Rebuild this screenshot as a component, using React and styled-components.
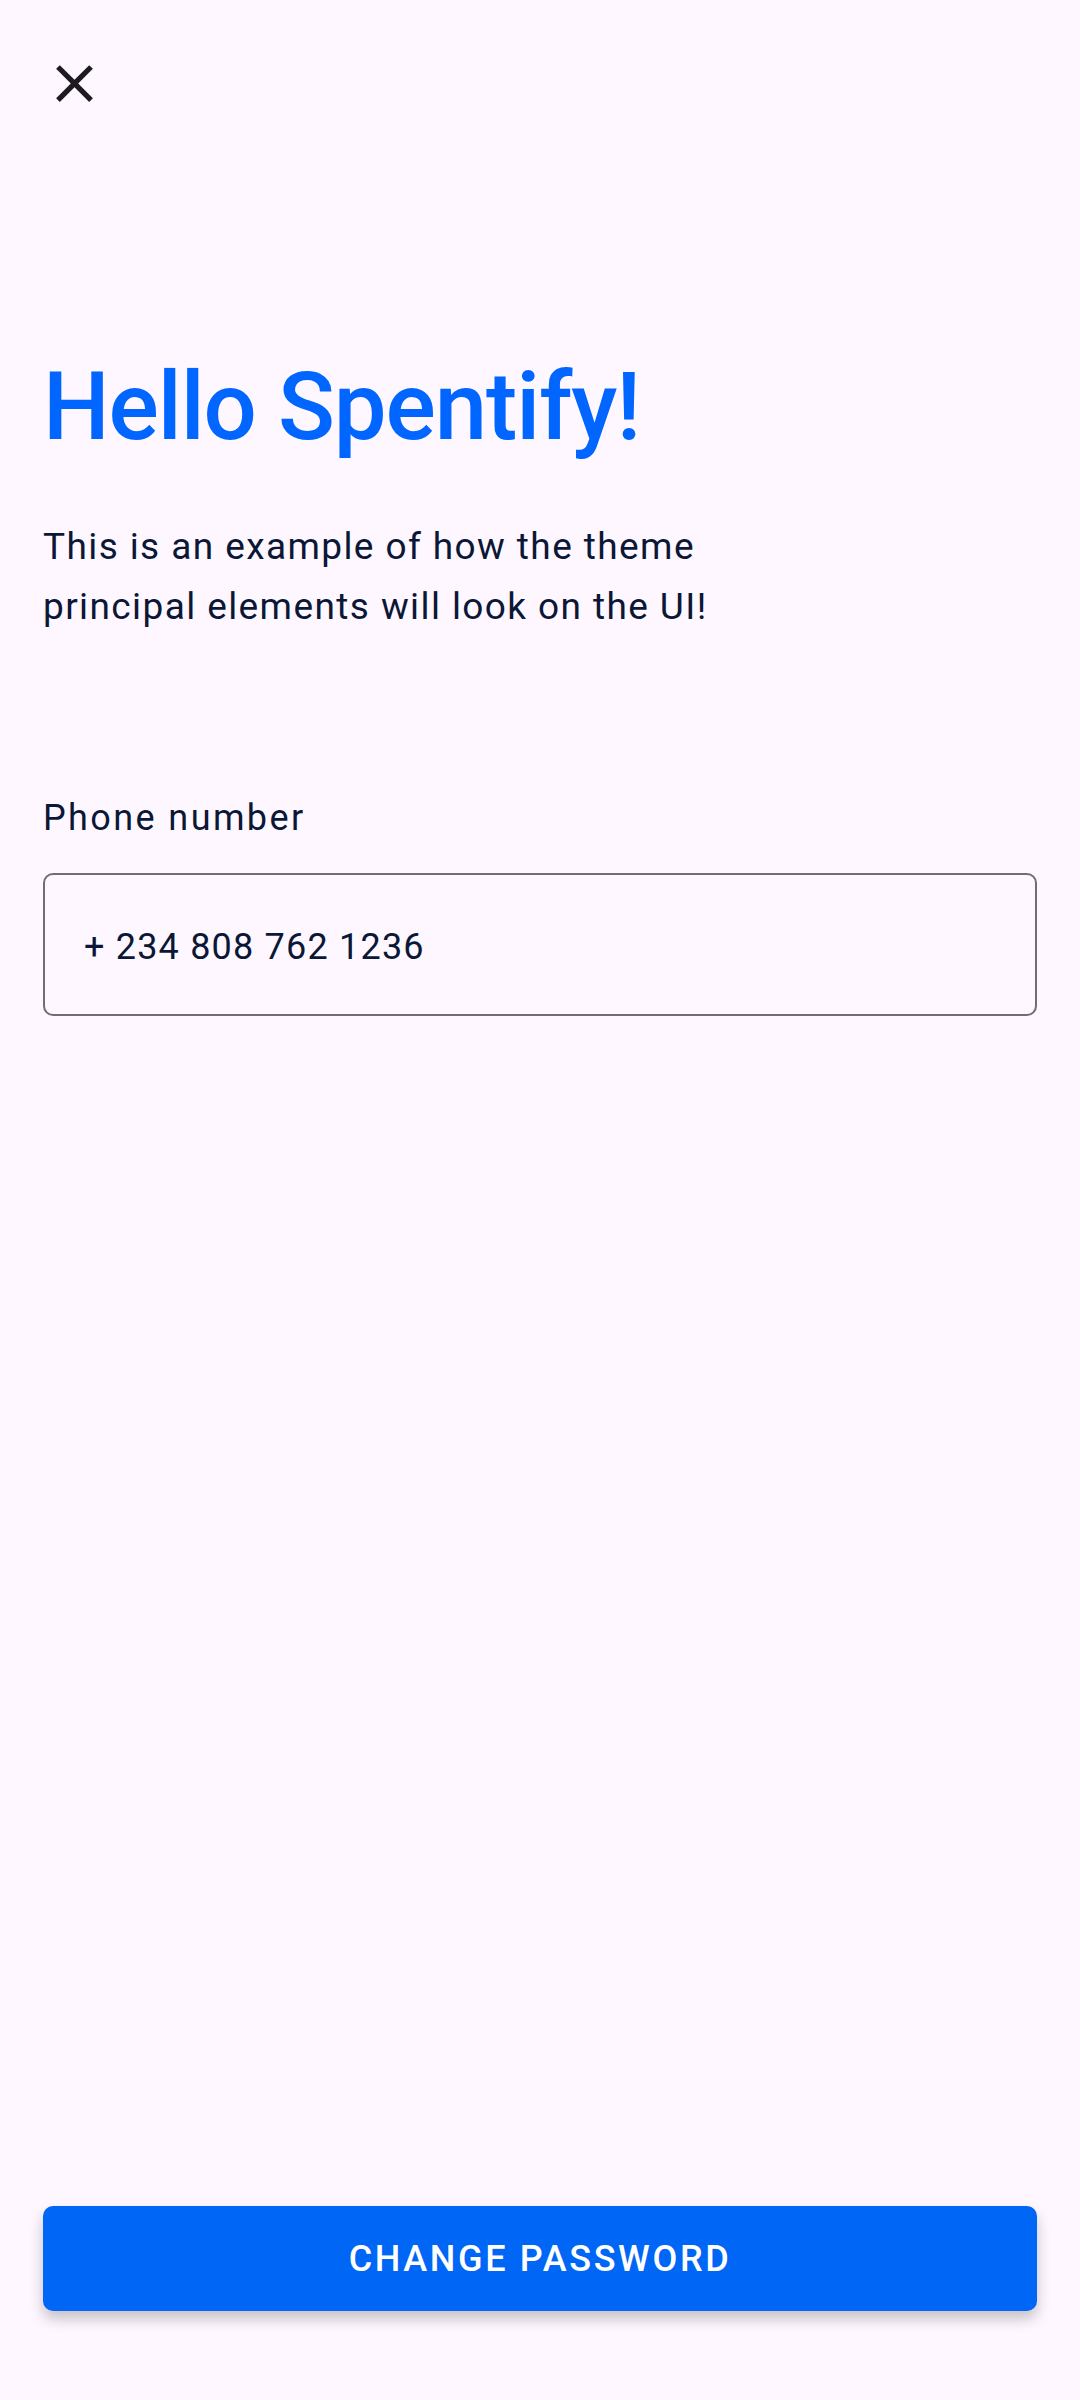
import React from "react";
import styled, { createGlobalStyle } from "styled-components";

const GlobalStyle = createGlobalStyle`
  html, body {
    margin: 0;
    padding: 0;
    background: #fef7ff;
  }
  * {
    box-sizing: border-box;
  }
`;

const Screen = styled.div`
  display: flex;
  flex-direction: column;
  height: 2400px;
  padding: 52px 43px 89px;
  background: #fef7ff;
  font-family: Roboto, "Liberation Sans", sans-serif;
  color: #0b1736;
`;

const CloseButton = styled.button`
  display: flex;
  align-items: center;
  justify-content: center;
  width: 63px;
  height: 63px;
  padding: 0;
  border: none;
  background: transparent;
  color: #1d1b20;
  cursor: pointer;
`;

const Title = styled.h1`
  margin: 234px 0 0;
  font-size: 94px;
  line-height: 116px;
  font-weight: 500;
  letter-spacing: -1.1px;
  color: #0066ff;
`;

const Intro = styled.p`
  margin: 52px 0 0;
  max-width: 760px;
  font-size: 37px;
  line-height: 60px;
  font-weight: 400;
  letter-spacing: 1.4px;
`;

const Field = styled.label`
  display: flex;
  flex-direction: column;
  gap: 31px;
  margin-top: 157px;
`;

const FieldLabel = styled.span`
  font-size: 36px;
  line-height: 48px;
  letter-spacing: 2.4px;
`;

const Input = styled.input`
  width: 100%;
  height: 143px;
  padding: 4px 0 0 39px;
  border: 2px solid #716c77;
  border-radius: 10px;
  background: transparent;
  font-family: inherit;
  font-size: 36px;
  line-height: 48px;
  letter-spacing: 1.2px;
  color: #0b1736;
  outline: none;
`;

const Spacer = styled.div`
  flex: 1;
`;

const PrimaryButton = styled.button`
  width: 100%;
  height: 105px;
  border: none;
  border-radius: 10px;
  background: #0066f5;
  color: #ffffff;
  font-family: Roboto, "Liberation Sans", sans-serif;
  font-size: 36px;
  font-weight: 500;
  letter-spacing: 2.65px;
  text-transform: uppercase;
  box-shadow: 0 8px 14px rgba(0, 0, 0, 0.22);
  cursor: pointer;
`;

function CloseIcon() {
  return (
    <svg width="63" height="63" viewBox="0 0 24 24" fill="currentColor">
      <path d="M19 6.41 17.59 5 12 10.59 6.41 5 5 6.41 10.59 12 5 17.59 6.41 19 12 13.41 17.59 19 19 17.59 13.41 12z" />
    </svg>
  );
}

export default function App() {
  return (
    <>
      <GlobalStyle />
      <Screen>
        <CloseButton aria-label="Close">
          <CloseIcon />
        </CloseButton>
        <Title>Hello Spentify!</Title>
        <Intro>
          This is an example of how the theme
          <br />
          principal elements will look on the UI!
        </Intro>
        <Field>
          <FieldLabel>Phone number</FieldLabel>
          <Input defaultValue="+ 234 808 762 1236" />
        </Field>
        <Spacer />
        <PrimaryButton>Change password</PrimaryButton>
      </Screen>
    </>
  );
}
